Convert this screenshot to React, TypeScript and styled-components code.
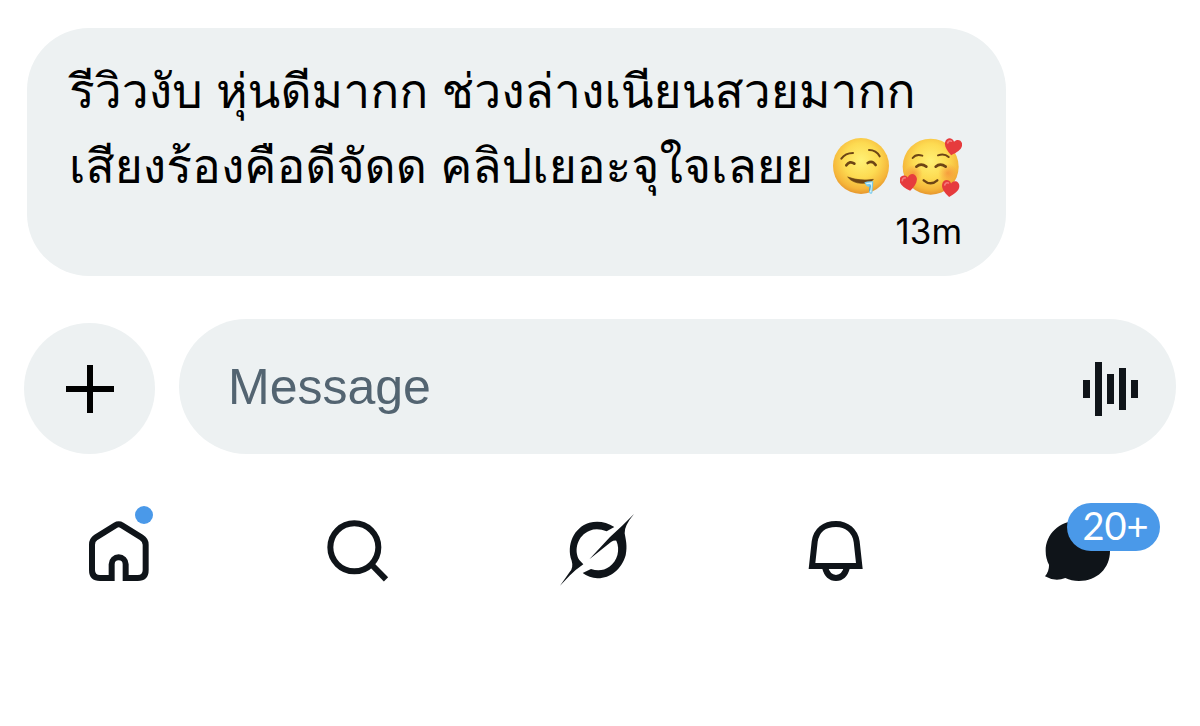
import React from "react";
import styled, { createGlobalStyle } from "styled-components";

const GlobalStyle = createGlobalStyle`
  *, *::before, *::after { box-sizing: border-box; }
  body {
    margin: 0;
    background: #ffffff;
    color: #000000;
    font-family: "Liberation Sans", sans-serif;
  }
`;

const Screen = styled.main`
  padding-top: 28px;
`;

const Bubble = styled.article`
  width: fit-content;
  max-width: calc(100% - 54px);
  margin-left: 27px;
  padding: 26px 44px 18px 42px;
  border-radius: 62px;
  background: #edf1f2;
`;

const MessageLine = styled.p`
  display: flex;
  align-items: center;
  justify-content: space-between;
  gap: 18px;
  height: 75px;
  margin: 0;
  font-family: "Liberation Sans", Loma, Garuda, Waree, sans-serif;
  font-size: 48px;
  line-height: 75px;
  white-space: nowrap;
`;

const EmojiGroup = styled.span`
  display: flex;
  gap: 7px;
`;

const EmojiArt = styled.svg`
  width: 62px;
  height: 62px;
  flex: none;
`;

const Time = styled.time`
  display: block;
  font-family: Inter, sans-serif;
  font-size: 35px;
  line-height: 54px;
  text-align: right;
`;

const Composer = styled.form`
  display: flex;
  align-items: flex-end;
  gap: 24px;
  padding: 43px 24px 0;
`;

const AddButton = styled.button`
  display: grid;
  place-items: center;
  flex: none;
  width: 131px;
  height: 131px;
  padding: 0;
  border: 0;
  border-radius: 50%;
  background: #edf1f2;
`;

const Field = styled.div`
  display: flex;
  align-items: center;
  flex: 1;
  min-width: 0;
  height: 135px;
  padding: 4px 37px 0 49px;
  border-radius: 68px;
  background: #edf1f2;
`;

const MessageInput = styled.input`
  flex: 1;
  min-width: 0;
  height: 72px;
  padding: 0 0 4px;
  border: 0;
  outline: 0;
  background: transparent;
  color: #0f1419;
  font-family: "Liberation Sans", sans-serif;
  font-size: 50px;
  &::placeholder { color: #536471; opacity: 1; }
`;

const VoiceButton = styled.button`
  display: grid;
  padding: 0;
  border: 0;
  background: none;
`;

const Tabs = styled.nav`
  display: flex;
  padding: 49px 6px 0 0;
`;

const Tab = styled.a`
  display: grid;
  place-items: center;
  flex: 1;
  height: 96px;
  color: #0f1419;
`;

const TabIcon = styled.span`
  position: relative;
  display: grid;
`;

const Dot = styled.span`
  position: absolute;
  top: -15px;
  right: -4px;
  width: 18px;
  height: 18px;
  border-radius: 50%;
  background: #4a99e9;
`;

const Count = styled.span`
  position: absolute;
  top: -18px;
  left: 28px;
  width: 93px;
  height: 48px;
  padding-left: 5px;
  border-radius: 24px;
  background: #4a99e9;
  color: #ffffff;
  font-family: Lato, sans-serif;
  font-size: 38px;
  line-height: 45px;
  text-align: center;
`;

const FaceGradient = ({ id }: { id: string }) => (
  <radialGradient id={id} cx="0.5" cy="0.4" r="0.62">
    <stop offset="0" stopColor="#fff176" />
    <stop offset="0.5" stopColor="#fddb52" />
    <stop offset="0.82" stopColor="#f5b63a" />
    <stop offset="1" stopColor="#e38f2b" />
  </radialGradient>
);

const DroolingFace = () => (
  <EmojiArt viewBox="33 46 186 186" role="img" aria-label="drooling face">
    <defs><FaceGradient id="drool" /></defs>
    <circle cx="123" cy="136" r="84" fill="url(#drool)" />
    <g fill="none" stroke="#6d4515" strokeLinecap="round">
      <path d="M64 114 Q76 97 99 97" strokeWidth="6" />
      <path d="M147 88 Q169 88 179 107" strokeWidth="6" />
      <path d="M79 134 Q89 119 103 129" strokeWidth="8" />
      <path d="M143 127 Q157 118 167 133" strokeWidth="8" />
    </g>
    <path d="M83 169 Q122 183 160 176 Q152 189 124 188 Q98 187 83 169Z" fill="#6d4515" stroke="#6d4515" strokeWidth="2" strokeLinejoin="round" />
    <path d="M133 185 Q145 180 160 182 L157 216 Q152 224 147 214 L149 197 Q142 203 133 185Z" fill="#79cbed" />
    <path d="M139 189 L154 187 L152 215" fill="none" stroke="#d8f5fb" strokeWidth="4" />
    <path d="M151 194 L149 210" stroke="#3b9bc9" strokeWidth="3" />
  </EmojiArt>
);

const Heart = ({ x, y, turn }: { x: number; y: number; turn: number }) => (
  <g transform={`translate(${x} ${y}) rotate(${turn})`}>
    <path d="M0 26 C-16 15 -27 3 -26 -9 C-25 -25 -7 -28 0 -15 C7 -28 25 -25 26 -9 C27 3 16 15 0 26Z" fill="#e63b3d" />
    <path d="M-18 -8 Q-16 -17 -8 -15" fill="none" stroke="#f4797b" strokeWidth="5" strokeLinecap="round" />
  </g>
);

const HeartsFace = () => (
  <EmojiArt viewBox="236 46 186 186" role="img" aria-label="smiling face with hearts">
    <defs>
      <FaceGradient id="love" />
      <radialGradient id="blush">
        <stop offset="0" stopColor="#f47b35" stopOpacity="0.6" />
        <stop offset="1" stopColor="#f47b35" stopOpacity="0" />
      </radialGradient>
    </defs>
    <circle cx="328" cy="138" r="84" fill="url(#love)" />
    <circle cx="277" cy="159" r="27" fill="url(#blush)" />
    <circle cx="380" cy="157" r="29" fill="url(#blush)" />
    <g fill="none" stroke="#6d4515" strokeLinecap="round">
      <path d="M274 112 Q284 99 303 105" strokeWidth="6" />
      <path d="M350 104 Q369 97 382 109" strokeWidth="6" />
      <path d="M285 138 Q299 126 315 138" strokeWidth="8" />
      <path d="M343 138 Q357 126 373 138" strokeWidth="8" />
      <path d="M307 179 Q328 197 348 179" strokeWidth="7" />
    </g>
    <Heart x={395} y={78} turn={12} />
    <Heart x={262} y={185} turn={-10} />
    <Heart x={387} y={203} turn={8} />
  </EmojiArt>
);

const PlusIcon = () => (
  <svg width="50" height="50" viewBox="0 0 50 50" aria-hidden="true">
    <path d="M1 25H49M25 1V49" stroke="#000000" strokeWidth="6" />
  </svg>
);

const VoiceIcon = () => (
  <svg width="56" height="56" viewBox="0 0 56 56" fill="#0f1419" aria-hidden="true">
    <path d="M0 19h7v18H0zM12 1h7v54h-7zM24 13h7v30h-7zM36 7h7v42h-7zM48 19h7v18h-7z" />
  </svg>
);

const HomeIcon = () => (
  <svg width="60" height="60" viewBox="59 92 180 180" aria-hidden="true">
    <path d="M127 263 H92 Q68 263 68 239 V163 Q68 149 80 141 L138 105 Q148 99 158 105 L216 141 Q229 149 229 163 V239 Q229 263 205 263 H169 V222 A21 21 0 0 0 127 222 Z" fill="none" stroke="currentColor" strokeWidth="18" />
  </svg>
);

const SearchIcon = () => (
  <svg width="62" height="62" viewBox="52 58 186 186" fill="none" stroke="currentColor" aria-hidden="true">
    <circle cx="134" cy="140" r="72" strokeWidth="18" />
    <path d="M184 190 L229 236" strokeWidth="18" />
  </svg>
);

const GrokIcon = () => (
  <svg width="76" height="74" viewBox="54 42 228 222" fill="currentColor" aria-hidden="true">
    <path d="M57 257 L86 216 Q98 203 92 182 C75 134 99 82 145 68 Q184 58 220 81 L197 94 Q169 83 146 92 C110 106 97 150 115 180 L127 193 Q105 208 87 226 Z" />
    <path d="M279 42 Q249 78 251 100 C254 119 260 137 254 166 C242 209 206 236 169 235 Q145 234 125 219 L150 207 Q181 217 205 200 C230 182 238 149 226 122 Q218 121 210 126 L145 178 L207 111 Q244 78 279 42Z" />
  </svg>
);

const BellIcon = () => (
  <svg width="56" height="62" viewBox="54 60 168 186" fill="none" stroke="currentColor" aria-hidden="true">
    <path d="M66 198 L74 125 C79 91 103 72 138 72 C171 72 195 93 200 125 L208 198 Z" strokeWidth="18" />
    <path d="M105 202 Q113 234 138 234 Q163 234 171 202" strokeWidth="18" />
  </svg>
);

const ChatIcon = () => (
  <svg width="72" height="60" viewBox="27 91 216 180" fill="currentColor" aria-hidden="true">
    <path d="M141 91 C88 91 47 130 47 181 Q47 204 57 222 Q58 242 45 257 Q76 275 106 262 Q124 271 147 271 C201 271 240 233 240 181 C240 130 199 91 141 91Z" />
  </svg>
);

export default function App() {
  return (
    <>
      <GlobalStyle />
      <Screen>
        <Bubble lang="th">
          <MessageLine>รีวิวงับ หุ่นดีมากก ช่วงล่างเนียนสวยมากก</MessageLine>
          <MessageLine>
            เสียงร้องคือดีจัดด คลิปเยอะจุใจเลยย
            <EmojiGroup>
              <DroolingFace />
              <HeartsFace />
            </EmojiGroup>
          </MessageLine>
          <Time>13m</Time>
        </Bubble>
        <Composer>
          <AddButton type="button" aria-label="Add attachment"><PlusIcon /></AddButton>
          <Field>
            <MessageInput type="text" placeholder="Message" aria-label="Message" />
            <VoiceButton type="button" aria-label="Record voice message"><VoiceIcon /></VoiceButton>
          </Field>
        </Composer>
        <Tabs aria-label="Primary">
          <Tab href="#home" aria-label="Home"><TabIcon><HomeIcon /><Dot /></TabIcon></Tab>
          <Tab href="#search" aria-label="Search"><TabIcon><SearchIcon /></TabIcon></Tab>
          <Tab href="#grok" aria-label="Grok"><TabIcon><GrokIcon /></TabIcon></Tab>
          <Tab href="#notifications" aria-label="Notifications"><TabIcon><BellIcon /></TabIcon></Tab>
          <Tab href="#messages" aria-label="Messages"><TabIcon><ChatIcon /><Count>20+</Count></TabIcon></Tab>
        </Tabs>
      </Screen>
    </>
  );
}
